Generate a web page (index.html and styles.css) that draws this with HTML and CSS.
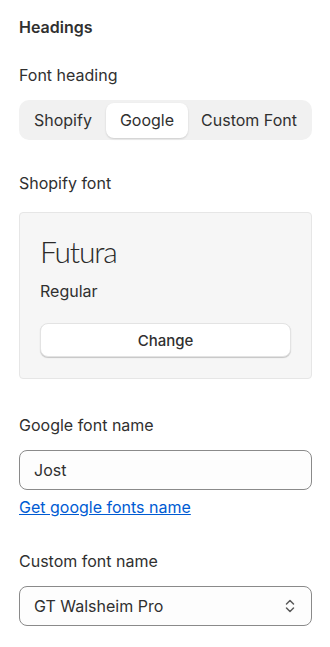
FILE: index.html
```html
<!DOCTYPE html>
<html lang="en">
<head>
  <meta charset="UTF-8">
  <title>Headings settings</title>
  <link rel="stylesheet" href="styles.css">
</head>
<body>

<div class="panel">
  <h2 class="title">Headings</h2>

  <div class="field">
    <div class="label">Font heading</div>
    <div class="segmented">
      <button class="seg">Shopify</button>
      <button class="seg active">Google</button>
      <button class="seg">Custom Font</button>
    </div>
  </div>

  <div class="field">
    <div class="label">Shopify font</div>
    <div class="font-card">
      <div class="font-name">Futura</div>
      <div class="font-style">Regular</div>
      <button class="change-btn">Change</button>
    </div>
  </div>

  <div class="field">
    <div class="label">Google font name</div>
    <input class="text-input" type="text" value="Jost">
    <a class="help-link" href="#">Get google fonts name</a>
  </div>

  <div class="field">
    <div class="label">Custom font name</div>
    <div class="select">
      <span>GT Walsheim Pro</span>
      <svg class="chevron" width="12" height="16" viewBox="0 0 12 16">
        <path d="M2.5 6 L6 2.5 L9.5 6" fill="none" stroke="#5a5a5a" stroke-width="1.5" stroke-linecap="round" stroke-linejoin="round"/>
        <path d="M2.5 10 L6 13.5 L9.5 10" fill="none" stroke="#5a5a5a" stroke-width="1.5" stroke-linecap="round" stroke-linejoin="round"/>
      </svg>
    </div>
  </div>
</div>

</body>
</html>
```

FILE: styles.css
```css
* {
  box-sizing: border-box;
  margin: 0;
  padding: 0;
}

body {
  font-family: Inter, 'Noto Sans', sans-serif;
  background: #fff;
  color: #303030;
  font-size: 16px;
}

.panel {
  padding: 17px 18px 20px 19px;
}

.title {
  font-size: 16px;
  font-weight: 600;
  line-height: 20px;
  margin-bottom: 28px;
}

.label {
  line-height: 20px;
  margin-bottom: 15px;
}

.segmented {
  display: flex;
  align-items: center;
  gap: 2px;
  background: #f1f1f1;
  border-radius: 10px;
  height: 40px;
  padding: 0 3px;
  margin-top: 1px;
  margin-bottom: 33px;
}

.seg {
  flex-shrink: 0;
  white-space: nowrap;
  font-family: inherit;
  font-size: 16px;
  color: #303030;
  background: transparent;
  border: none;
  height: 35px;
  padding: 0 12px;
  border-radius: 8px;
}

.seg:last-child {
  padding: 0 8px 0 11px;
}

.seg.active {
  background: #fff;
  padding: 0 14px;
  box-shadow: 0 1px 2px rgba(0, 0, 0, 0.15);
}

.font-card {
  background: #f6f6f6;
  border: 1px solid #e6e6e6;
  border-radius: 4px;
  padding: 20px 20px 21px 20px;
  margin-top: 19px;
  margin-bottom: 36px;
}

.font-name {
  font-family: Lato, 'Noto Sans', sans-serif;
  font-weight: 300;
  font-size: 30px;
  letter-spacing: -1.2px;
  line-height: 36px;
  color: #2a2a2a;
}

.font-style {
  line-height: 20px;
  margin-top: 12px;
  margin-bottom: 22px;
}

.change-btn {
  display: block;
  width: 100%;
  height: 34px;
  font-family: inherit;
  font-size: 15px;
  font-weight: 550;
  color: #303030;
  background: #fff;
  border: 1px solid #e3e3e3;
  border-radius: 8px;
  box-shadow: 0 1px 1px rgba(0, 0, 0, 0.2);
}

.text-input {
  display: block;
  width: 100%;
  height: 40px;
  font-family: inherit;
  font-size: 16px;
  color: #303030;
  background: #fdfdfd;
  border: 1px solid #8a8a8a;
  border-radius: 8px;
  padding: 0 14px;
  outline: none;
}

.help-link {
  display: inline-block;
  margin-top: 7px;
  color: #005bd3;
  line-height: 20px;
  margin-bottom: 34px;
}

.select {
  display: flex;
  align-items: center;
  justify-content: space-between;
  height: 40px;
  background: #fdfdfd;
  border: 1px solid #8a8a8a;
  border-radius: 8px;
  padding: 0 15px 0 14px;
}
```
